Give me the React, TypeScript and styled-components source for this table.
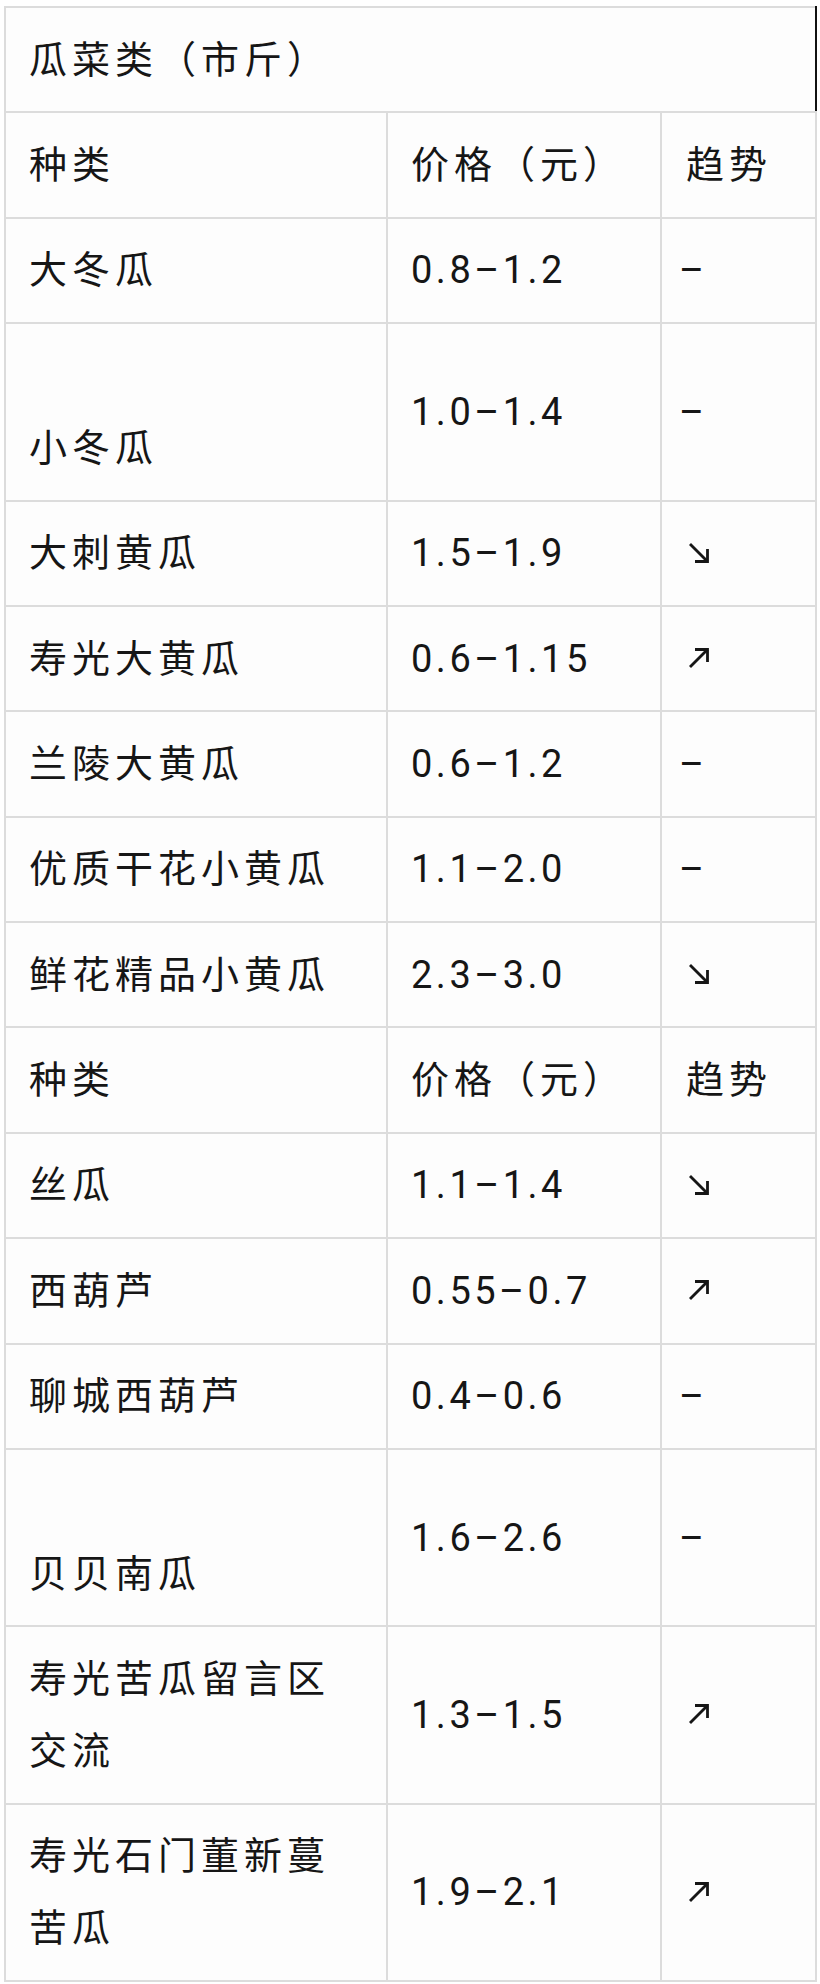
import { Fragment } from "react";
import { styled, createGlobalStyle } from "styled-components";

const GlobalStyle = createGlobalStyle`
  html, body {
    margin: 0;
    padding: 0;
    background: #ffffff;
  }
  body {
    font-family: Roboto, "Noto Sans CJK SC", "Noto Sans", sans-serif;
    color: #161616;
  }
`;

const Page = styled.div`
  padding: 6px 5px 0 4px;
`;

const Table = styled.table`
  width: 811px;
  table-layout: fixed;
  border-collapse: collapse;
  border: 2px solid #dcdcdc;
  background: #fdfdfd;
  font-size: 38px;
  letter-spacing: 5px;
  line-height: 72px;
`;

const Cell = styled.td`
  border: 2px solid #dcdcdc;
  padding: 15.7px 20px 15.7px 23px;
  vertical-align: middle;
  font-weight: 400;
  white-space: normal;
  word-break: break-all;
`;

const PriceCell = styled(Cell)`
  letter-spacing: 3.5px;
`;

const TitleCell = styled(Cell)`
  border-right: 2px solid #111111;
`;

const TrendCell = styled(Cell)`
  padding-left: 24px;
`;

const Mark = styled.span`
  display: flex;
  align-items: center;
  height: 72px;
`;

const Dash = styled.span`
  margin-left: -7px;
`;

const ArrowSvg = styled.svg`
  display: block;
  width: 22px;
  height: 22px;
  margin-left: 2px;
  margin-top: -1px;
`;

type Trend = "flat" | "up" | "down";

function TrendArrow({ dir }: { dir: "up" | "down" }) {
  return (
    <ArrowSvg viewBox="0 0 22 22" fill="none" stroke="#161616" strokeWidth={2.8}>
      {dir === "down" ? (
        <>
          <path d="M2 2 L19.5 19.5" />
          <path d="M7 19.5 H19.5 V7" />
        </>
      ) : (
        <>
          <path d="M2 20 L19.5 2.5" />
          <path d="M7 2.5 H19.5 V15" />
        </>
      )}
    </ArrowSvg>
  );
}

interface Row {
  name: string[];
  price?: string;
  trend?: Trend;
  header?: boolean;
}

const rows: Row[] = [
  { name: ["种类"], header: true },
  { name: ["大冬瓜"], price: "0.8–1.2", trend: "flat" },
  { name: ["", "小冬瓜"], price: "1.0–1.4", trend: "flat" },
  { name: ["大刺黄瓜"], price: "1.5–1.9", trend: "down" },
  { name: ["寿光大黄瓜"], price: "0.6–1.15", trend: "up" },
  { name: ["兰陵大黄瓜"], price: "0.6–1.2", trend: "flat" },
  { name: ["优质干花小黄瓜"], price: "1.1–2.0", trend: "flat" },
  { name: ["鲜花精品小黄瓜"], price: "2.3–3.0", trend: "down" },
  { name: ["种类"], header: true },
  { name: ["丝瓜"], price: "1.1–1.4", trend: "down" },
  { name: ["西葫芦"], price: "0.55–0.7", trend: "up" },
  { name: ["聊城西葫芦"], price: "0.4–0.6", trend: "flat" },
  { name: ["", "贝贝南瓜"], price: "1.6–2.6", trend: "flat" },
  { name: ["寿光苦瓜留言区交流"], price: "1.3–1.5", trend: "up" },
  { name: ["寿光石门董新蔓苦瓜"], price: "1.9–2.1", trend: "up" },
];

function NameLines({ lines }: { lines: string[] }) {
  return (
    <>
      {lines.map((line, i) => (
        <Fragment key={i}>
          {i > 0 && <br />}
          {line}
        </Fragment>
      ))}
    </>
  );
}

export default function App() {
  return (
    <Page>
      <GlobalStyle />
      <Table>
        <colgroup>
          <col style={{ width: 382 }} />
          <col style={{ width: 274 }} />
          <col style={{ width: 155 }} />
        </colgroup>
        <tbody>
          <tr>
            <TitleCell colSpan={3}>瓜菜类（市斤）</TitleCell>
          </tr>
          {rows.map((row, i) =>
            row.header ? (
              <tr key={i}>
                <Cell>种类</Cell>
                <Cell>价格（元）</Cell>
                <TrendCell>趋势</TrendCell>
              </tr>
            ) : (
              <tr key={i}>
                <Cell>
                  <NameLines lines={row.name} />
                </Cell>
                <PriceCell>{row.price}</PriceCell>
                <TrendCell>
                  <Mark>
                    {row.trend === "flat" ? (
                      <Dash>–</Dash>
                    ) : (
                      row.trend && <TrendArrow dir={row.trend} />
                    )}
                  </Mark>
                </TrendCell>
              </tr>
            )
          )}
        </tbody>
      </Table>
    </Page>
  );
}
